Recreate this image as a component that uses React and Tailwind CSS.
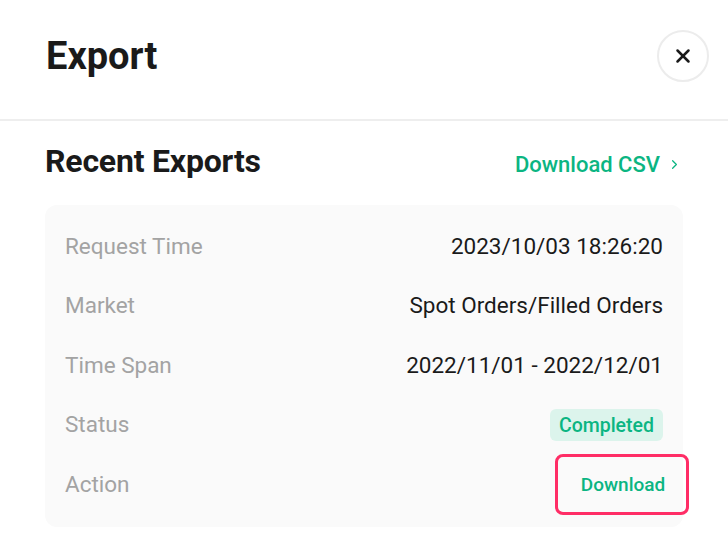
import { X, ChevronRight } from "lucide-react";

const rows = [
  { label: "Request Time", value: "2023/10/03 18:26:20" },
  { label: "Market", value: "Spot Orders/Filled Orders" },
  { label: "Time Span", value: "2022/11/01 - 2022/12/01" },
];

const App = () => {
  return (
    <div className="w-[728px] h-[534px] bg-white overflow-hidden font-['Roboto',sans-serif]">
      {/* Header */}
      <div className="h-[121px] flex items-center justify-between pl-[46px] pr-[19px] border-b-2 border-[#eeeeee]">
        <h1 className="text-[38px] font-bold text-[#1a1a1a] -mt-[7px]">Export</h1>
        <button className="w-[52px] h-[52px] rounded-full border-2 border-[#ececec] flex items-center justify-center text-[#1a1a1a] -mt-[8px]">
          <X size={22} strokeWidth={2.75} />
        </button>
      </div>

      <div className="px-[45px]">
        <div className="flex items-center justify-between h-[84px] pb-[1px]">
          <h2 className="text-[32px] font-bold text-[#1a1a1a] tracking-[-0.2px] mt-[-3px]">Recent Exports</h2>
          <a className="flex items-center gap-[7px] text-[#0bb582] text-[22px] font-medium mr-[1px] mt-[3px]">
            Download CSV
            <ChevronRight size={15} strokeWidth={2} />
          </a>
        </div>

        <div className="bg-[#fafafa] rounded-[12px] px-[20px] py-[12px]">
          {rows.map((r) => (
            <div key={r.label} className="h-[59.5px] flex items-center justify-between text-[22.5px]">
              <span className="text-[#a3a3a3]">{r.label}</span>
              <span className="text-[#1a1a1a]">{r.value}</span>
            </div>
          ))}
          <div className="h-[59.5px] flex items-center justify-between text-[22.5px]">
            <span className="text-[#a3a3a3]">Status</span>
            <span className="bg-[#dcf4ec] text-[#0bb582] text-[19.5px] font-medium rounded-[6px] px-[9px] h-[32px] flex items-center">
              Completed
            </span>
          </div>
          <div className="h-[59.5px] flex items-center justify-between text-[22.5px]">
            <span className="text-[#a3a3a3]">Action</span>
            <span className="relative text-[#0bb582] text-[19px] font-medium w-[134px] h-[61px] -mr-[26px] flex items-center justify-center pl-[2px]">
              Download
              <span className="absolute inset-0 border-[3.5px] border-[#ff2d66] rounded-[8px]" />
            </span>
          </div>
        </div>
      </div>
    </div>
  );
};

export default App;
